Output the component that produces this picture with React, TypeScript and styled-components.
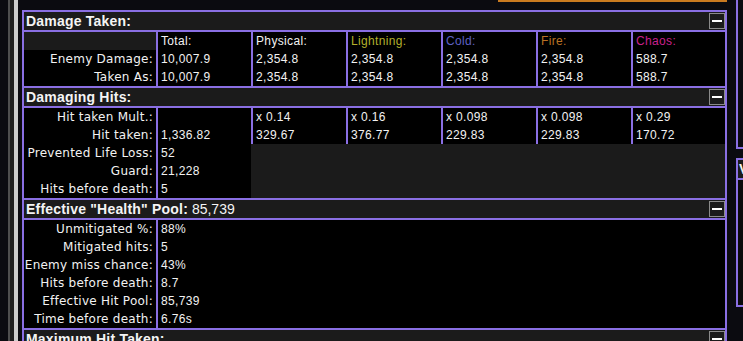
import React from "react";
import styled, { createGlobalStyle } from "styled-components";

const PURPLE = "#8a6fe3";
const GRAY = "#1b1b1b";
const BG = "#0b0b10";

const GlobalStyle = createGlobalStyle`
  html, body {
    margin: 0;
    padding: 0;
    background: ${BG};
    overflow: hidden;
  }
  body {
    font-family: "DejaVu Sans", "Liberation Sans", sans-serif;
    color: #f2f2f2;
  }
`;

type Col = { text: string; color?: string };

const columns: Col[] = [
  { text: "Total:" },
  { text: "Physical:" },
  { text: "Lightning:", color: "#b3b02c" },
  { text: "Cold:", color: "#5d60c4" },
  { text: "Fire:", color: "#b97123" },
  { text: "Chaos:", color: "#c8208c" },
];

const damageRows = [
  { label: "Enemy Damage:", values: ["10,007.9", "2,354.8", "2,354.8", "2,354.8", "2,354.8", "588.7"] },
  { label: "Taken As:", values: ["10,007.9", "2,354.8", "2,354.8", "2,354.8", "2,354.8", "588.7"] },
];

const hitRows = [
  { label: "Hit taken Mult.:", values: ["", "x 0.14", "x 0.16", "x 0.098", "x 0.098", "x 0.29"] },
  { label: "Hit taken:", values: ["1,336.82", "329.67", "376.77", "229.83", "229.83", "170.72"] },
  { label: "Prevented Life Loss:", values: ["52"] },
  { label: "Guard:", values: ["21,228"] },
  { label: "Hits before death:", values: ["5"] },
];

const poolRows = [
  { label: "Unmitigated %:", value: "88%" },
  { label: "Mitigated hits:", value: "5" },
  { label: "Enemy miss chance:", value: "43%" },
  { label: "Hits before death:", value: "8.7" },
  { label: "Effective Hit Pool:", value: "85,739" },
  { label: "Time before death:", value: "6.76s" },
];

const Section = ({
  title,
  extra,
  children,
}: {
  title: string;
  extra?: string;
  children?: React.ReactNode;
}) => (
  <SSection>
    <SHeader>
      <STitle>
        {title}
        {extra && <SExtra> {extra}</SExtra>}
      </STitle>
      <SMinus />
    </SHeader>
    {children}
  </SSection>
);

const App = () => (
  <>
    <GlobalStyle />
    <SPage>
      <SScrollStrip />
      <SMain>
        <SOrangeBox>
          <SOrangeCell />
          <SOrangeCell divider />
        </SOrangeBox>
        <SPanel>
          <Section title="Damage Taken:">
            <STable>
              <SBlank />
              {columns.map((c) => (
                <SValue key={c.text} color={c.color}>
                  {c.text}
                </SValue>
              ))}
              {damageRows.map((r) => (
                <React.Fragment key={r.label}>
                  <SLabel>{r.label}</SLabel>
                  {r.values.map((v, i) => (
                    <SValue key={i}>{v}</SValue>
                  ))}
                </React.Fragment>
              ))}
            </STable>
          </Section>
          <Section title="Damaging Hits:">
            <STable>
              {hitRows.map((r) => (
                <React.Fragment key={r.label}>
                  <SLabel>{r.label}</SLabel>
                  {r.values.map((v, i) => (
                    <SValue key={i}>{v}</SValue>
                  ))}
                </React.Fragment>
              ))}
            </STable>
          </Section>
          <Section title={'Effective "Health" Pool:'} extra="85,739">
            <STable>
              {poolRows.map((r) => (
                <React.Fragment key={r.label}>
                  <SLabel>{r.label}</SLabel>
                  <SValue wide>{r.value}</SValue>
                </React.Fragment>
              ))}
            </STable>
          </Section>
          <Section title="Maximum Hit Taken:" />
        </SPanel>
      </SMain>
      <SSide>
        <SSideTop />
        <SSidePanel>
          <SSideHeader>Vaal</SSideHeader>
          <SSideBody />
        </SSidePanel>
      </SSide>
    </SPage>
  </>
);

const SPage = styled.div`
  display: flex;
  width: 743px;
  height: 341px;
  overflow: hidden;
`;

const SScrollStrip = styled.div`
  flex: none;
  width: 22px;
  background: linear-gradient(
    to right,
    ${BG} 0 8px,
    #4e4e4e 8px 10px,
    #1f1f1f 10px 14px,
    #cdcdcd 14px 18px,
    ${BG} 18px
  );
`;

const SMain = styled.div`
  flex: none;
  width: 705px;
  display: flex;
  flex-direction: column;
  gap: 8px;
`;

const SOrangeBox = styled.div`
  align-self: flex-end;
  width: 229px;
  height: 6px;
  box-sizing: border-box;
  display: grid;
  grid-template-columns: 132px 1fr;
  border: 2px solid #c97a20;
  border-top: none;
  background: #1d1932;
`;

const SOrangeCell = styled.div<{ divider?: boolean }>`
  border-left: ${(p) => (p.divider ? "2px solid #c97a20" : "none")};
`;

const SPanel = styled.div`
  display: flex;
  flex-direction: column;
  gap: 2px;
  padding: 2px 2px 0;
  background: ${PURPLE};
`;

const SSection = styled.section`
  display: flex;
  flex-direction: column;
  gap: 2px;
`;

const SHeader = styled.div`
  height: 18px;
  display: flex;
  align-items: center;
  justify-content: space-between;
  padding-left: 2px;
  background: ${GRAY};
`;

const STitle = styled.div`
  font-family: "Liberation Sans", Arial, sans-serif;
  font-weight: bold;
  font-size: 14px;
  letter-spacing: 0.2px;
  line-height: 18px;
  color: #f4f4f4;
`;

const SExtra = styled.span`
  font-weight: normal;
  letter-spacing: 0;
`;

const SMinus = styled.div`
  width: 16px;
  height: 16px;
  box-sizing: border-box;
  border: 1px solid #8a8a8a;
  background: ${GRAY};
  display: flex;
  align-items: center;
  justify-content: center;

  &::after {
    content: "";
    width: 10px;
    height: 2px;
    background: #ffffff;
  }
`;

const STable = styled.div`
  display: grid;
  grid-template-columns: 132px repeat(5, 95px) 1fr;
  grid-auto-rows: 18px;
  background: ${GRAY};
`;

const SBlank = styled.div`
  grid-column: 1;
`;

const SLabel = styled.div`
  grid-column: 1;
  background: #000;
  text-align: right;
  padding-right: 3px;
  font-size: 12px;
  line-height: 18px;
  letter-spacing: 0.25px;
  white-space: nowrap;
`;

const SValue = styled.div<{ color?: string; wide?: boolean }>`
  grid-column: ${(p) => (p.wide ? "2 / -1" : "auto")};
  background: #000;
  border-left: 2px solid ${PURPLE};
  padding-left: 3px;
  font-family: "Liberation Sans", Arial, sans-serif;
  font-size: 12px;
  line-height: 18px;
  letter-spacing: 0.35px;
  color: ${(p) => p.color ?? "#f2f2f2"};
  white-space: nowrap;
`;

const SSide = styled.div`
  flex: none;
  width: 200px;
  margin-left: 9px;
  display: flex;
  flex-direction: column;
  gap: 9px;
`;

const SSideTop = styled.div`
  height: 149px;
  box-sizing: border-box;
  border: 2px solid ${PURPLE};
  border-top: none;
`;

const SSidePanel = styled.div`
  height: 149px;
  box-sizing: border-box;
  border: 2px solid ${PURPLE};
  display: flex;
  flex-direction: column;
`;

const SSideHeader = styled.div`
  height: 18px;
  padding-left: 1px;
  background: ${GRAY};
  border-bottom: 2px solid ${PURPLE};
  font-family: "Liberation Sans", Arial, sans-serif;
  font-weight: bold;
  font-size: 14px;
  line-height: 18px;
`;

const SSideBody = styled.div`
  flex: 1;
  background: #0a0a0a;
`;

export default App;
